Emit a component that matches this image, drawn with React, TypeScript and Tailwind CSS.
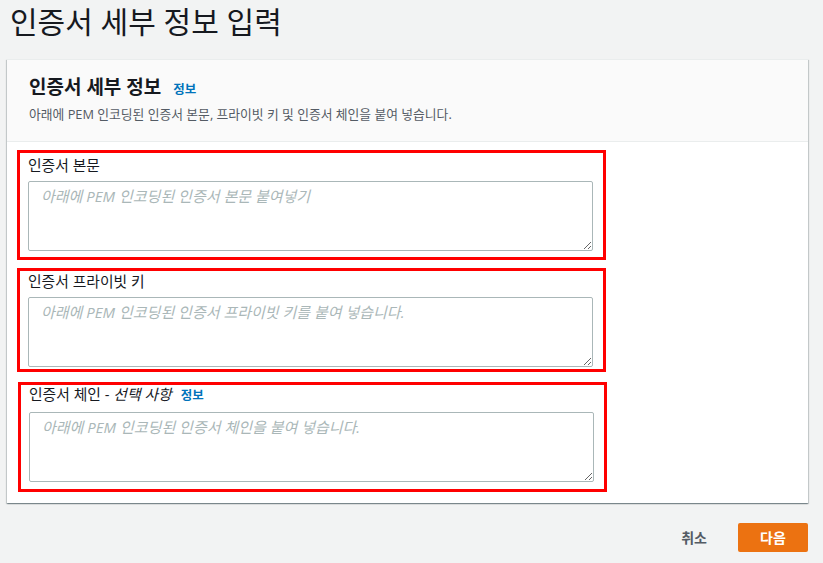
import React from 'react';

const font = { fontFamily: '"Open Sans", "Noto Sans CJK KR", sans-serif' };

function Field({
    label,
    placeholder,
    boxClass,
}: {
    label: React.ReactNode;
    placeholder: string;
    boxClass: string;
}) {
    return (
        <div className={`w-[589px] border-[3px] border-[#ff0000] pl-[8px] ${boxClass}`}>
            <div className="text-[14.8px] leading-5 text-[#16191f]">{label}</div>
            <textarea
                className="mt-[6px] block h-[70px] w-[565px] rounded-[2px] border border-[#aab7b8] bg-white px-3 py-[4px] text-[15px] leading-5 text-[#16191f] placeholder:italic placeholder:text-[#aab7b8] focus:outline-none"
                placeholder={placeholder}
            />
        </div>
    );
}

export default function App() {
    return (
        <div className="min-h-[563px] bg-[#f2f3f3] pl-[7px] pr-[15px] pt-[4px]" style={font}>
            {/* Page title */}
            <h1 className="pl-[3px] text-[30px] font-normal leading-9 text-[#16191f]">인증서 세부 정보 입력</h1>

            {/* Card */}
            <div className="mt-[19px] border-t border-[#eaeded] bg-white shadow-[0_1px_1px_0_rgba(0,28,36,0.3),1px_1px_1px_0_rgba(0,28,36,0.15),-1px_1px_1px_0_rgba(0,28,36,0.15)]">
                <div className="border-b border-[#eaeded] bg-[#fafafa] px-[22px] pt-[15px] pb-[19px]">
                    <div className="flex items-baseline gap-[12px]">
                        <h2 className="text-[19px] font-bold leading-6 text-[#16191f]">인증서 세부 정보</h2>
                        <a className="text-[12.5px] font-bold text-[#0073bb]">정보</a>
                    </div>
                    <p className="mt-[6px] text-[12.8px] leading-4 text-[#545b64]">
                        아래에 PEM 인코딩된 인증서 본문, 프라이빗 키 및 인증서 체인을 붙여 넣습니다.
                    </p>
                </div>

                <div className="flex flex-col pt-[8px] pb-[11px] pl-[10px]">
                    <Field
                        label="인증서 본문"
                        placeholder="아래에 PEM 인코딩된 인증서 본문 붙여넣기"
                        boxClass="pt-[2px] pb-[6px]"
                    />
                    <Field
                        label="인증서 프라이빗 키"
                        placeholder="아래에 PEM 인코딩된 인증서 프라이빗 키를 붙여 넣습니다."
                        boxClass="mt-[8px] pb-[2px]"
                    />
                    <Field
                        label={
                            <span className="flex items-baseline gap-[9px]">
                                <span>
                                    인증서 체인 - <i>선택 사항</i>
                                </span>
                                <a className="text-[12.5px] font-bold text-[#0073bb]">정보</a>
                            </span>
                        }
                        placeholder="아래에 PEM 인코딩된 인증서 체인을 붙여 넣습니다."
                        boxClass="ml-[1px] mt-[10px] pb-[7px] [&>div:first-child]:-mt-[1px]"
                    />
                </div>
            </div>

            {/* Footer actions */}
            <div className="mt-[20px] flex items-center justify-end gap-[31px]">
                <button className="text-[14px] font-bold text-[#545b64]">취소</button>
                <button className="h-[29px] w-[70px] rounded-[2px] bg-[#ec7211] text-[14px] font-bold text-white">
                    다음
                </button>
            </div>
        </div>
    );
}
